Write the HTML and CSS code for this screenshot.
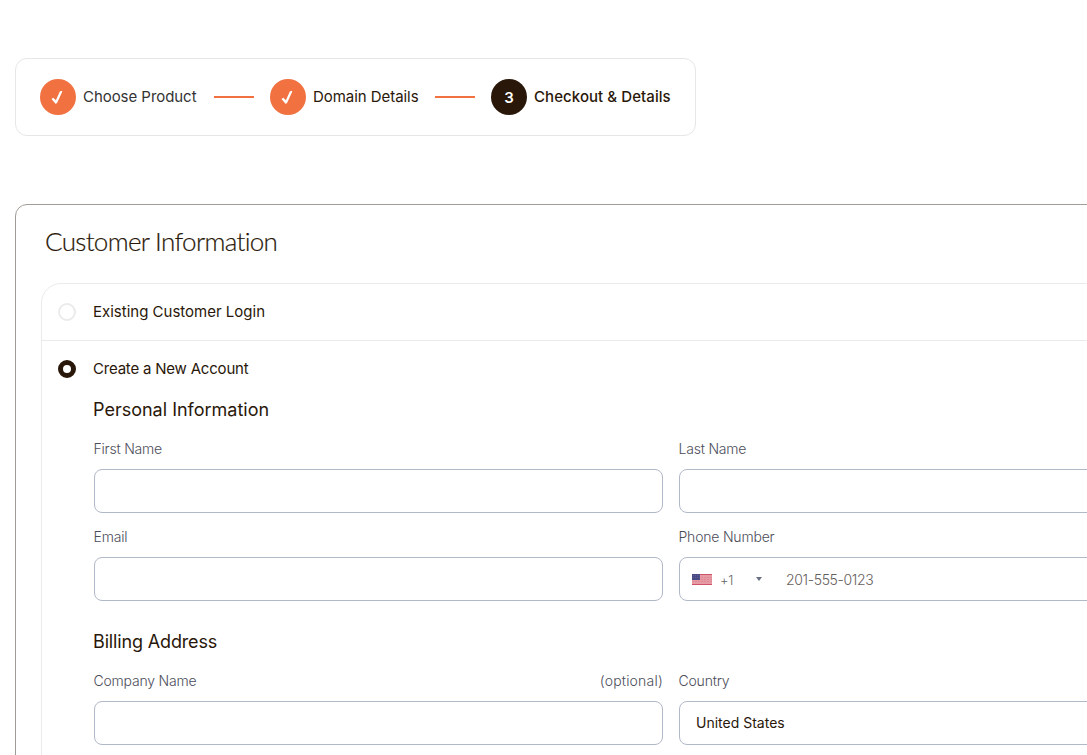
FILE: index.html
```html
<!DOCTYPE html>
<html lang="en">
<head>
  <meta charset="UTF-8" />
  <meta name="viewport" content="width=device-width, initial-scale=1.0" />
  <title>Checkout</title>
  <link rel="stylesheet" href="styles.css">
</head>
<body>
  <div class="page">
    <!-- Order steps -->
    <div class="steps">
      <div class="step">
        <span class="step-icon">
          <svg width="18" height="18" viewBox="0 0 18 18"><path d="M2.5 11 L4.3 9.8 L6.9 12.3 L10.6 3.9 Q11.2 2.6 12.9 3.1 Q13.5 3.4 13 4.2 L8.3 14.6 Q7.5 16.2 6.3 15.5 Z" fill="#fff" /></svg>
        </span>
        <span class="step-label choose">Choose Product</span>
      </div>
      <span class="step-line"></span>
      <div class="step">
        <span class="step-icon">
          <svg width="18" height="18" viewBox="0 0 18 18"><path d="M2.5 11 L4.3 9.8 L6.9 12.3 L10.6 3.9 Q11.2 2.6 12.9 3.1 Q13.5 3.4 13 4.2 L8.3 14.6 Q7.5 16.2 6.3 15.5 Z" fill="#fff" /></svg>
        </span>
        <span class="step-label domain">Domain Details</span>
      </div>
      <span class="step-line"></span>
      <div class="step active">
        <span class="step-icon">3</span>
        <span class="step-label">Checkout &amp; Details</span>
      </div>
    </div>

    <div class="card">
      <h2>Customer Information</h2>
      <div class="panel">
        <label class="choice">
          <input type="radio" name="custtype" />
          <span class="existing">Existing Customer Login</span>
        </label>
        <div class="account">
          <label class="choice">
            <input type="radio" name="custtype" checked />
            <span class="create">Create a New Account</span>
          </label>
          <div class="account-form">
            <h3>Personal Information</h3>
            <div class="fields">
              <div class="field">
                <label for="firstname"><span>First Name</span></label>
                <input type="text" id="firstname" />
              </div>
              <div class="field">
                <label for="lastname"><span>Last Name</span></label>
                <input type="text" id="lastname" />
              </div>
              <div class="field">
                <label for="email"><span>Email</span></label>
                <input type="text" id="email" />
              </div>
              <div class="field">
                <label for="phone"><span>Phone Number</span></label>
                <div class="phone">
                  <svg class="flag" width="20" height="11" viewBox="0 0 20 11">
                    <rect width="20" height="11" fill="#e59aa4" />
                    <path d="M0 .5h20M0 10.5h20" stroke="#cf5368" />
                    <path d="M0 3.5h20M0 5.5h20M0 7.5h20" stroke="#dc808e" stroke-dasharray="2 1" stroke-width=".7" />
                    <rect width="8" height="6" fill="#494a83" />
                    <path d="M1 1.5h7M1 3.5h7" stroke="#706c9c" stroke-width=".6" stroke-dasharray="1 1" />
                  </svg>
                  <span class="dial-code">+1</span>
                  <span class="arrow"></span>
                  <input type="tel" id="phone" placeholder="201-555-0123" />
                </div>
              </div>
            </div>

            <h3 class="billing">Billing Address</h3>
            <div class="fields">
              <div class="field">
                <label for="company"><span>Company Name</span> <span class="optional">(optional)</span></label>
                <input type="text" id="company" />
              </div>
              <div class="field">
                <label for="country"><span>Country</span></label>
                <select id="country">
                  <option>United States</option>
                </select>
              </div>
            </div>
          </div>
        </div>
      </div>
    </div>
  </div>
</body>
</html>
```
FILE: styles.css
```css
* {
  box-sizing: border-box;
}
body {
  margin: 0;
  background: #fff;
  color: #291709;
  font-family: Inter, "Liberation Sans", sans-serif;
  font-size: 15px;
  letter-spacing: -0.2px;
  height: 755px;
  overflow: hidden;
}
.page {
  width: 1307px;
  padding: 58px 0 0 15px;
}
.steps {
  display: flex;
  align-items: center;
  width: 681px;
  height: 78px;
  padding: 0 24px;
  border: 1px solid #e6e6e6;
  border-radius: 12px;
}
.step {
  display: flex;
  align-items: center;
  gap: 7px;
  white-space: nowrap;
}
.step-icon {
  display: flex;
  align-items: center;
  justify-content: center;
  width: 36px;
  height: 36px;
  border-radius: 50%;
  background: #f17141;
  color: #fff;
  font-weight: 600;
}
.active .step-icon {
  background: #291709;
}
.step-label {
  padding-bottom: 2px;
  letter-spacing: -0.05px;
}
.step-label.choose {
  width: 115px;
  color: #333;
}
.step-label.domain {
  width: 106px;
}
.active .step-label {
  font-weight: 500;
  letter-spacing: 0.07px;
}
.step-line {
  width: 40px;
  height: 2px;
  margin: 0 16px;
  background: #f17141;
}
.card {
  height: 700px;
  margin-top: 68px;
  padding: 0 25px;
  border: 1px solid #a29c97;
  border-radius: 12px;
}
h2 {
  margin: 0;
  padding: 16px 0 0 4px;
  height: 78px;
  font-family: Lato, sans-serif;
  font-size: 26px;
  font-weight: 300;
  line-height: 40px;
  letter-spacing: -0.68px;
  -webkit-text-stroke: 0.2px #291709;
}
.panel {
  height: 600px;
  border: 1px solid #ebebeb;
  border-radius: 20px;
}
.choice {
  display: flex;
  align-items: center;
  gap: 17px;
  height: 56px;
  padding-left: 16px;
}
.choice span {
  padding-bottom: 2px;
}
.choice .existing {
  letter-spacing: 0;
}
.choice input {
  appearance: none;
  width: 18px;
  height: 18px;
  margin: 0;
  border: 2px solid #ebebeb;
  border-radius: 50%;
}
.choice input:checked {
  border: 5px solid #291709;
}
.account {
  border-top: 1px solid #ebebeb;
}
.account-form {
  padding: 0 52px;
}
h3 {
  margin: 0 0 0 -1px;
  font-size: 18px;
  font-weight: 400;
  line-height: 26px;
  letter-spacing: 0;
}
h3.billing {
  margin-top: 28px;
  letter-spacing: -0.15px;
}
.fields {
  display: grid;
  grid-template-columns: 569px 569px;
  gap: 12px 16px;
  margin-top: 14px;
}
.field label {
  display: flex;
  justify-content: space-between;
  height: 32px;
  margin-left: -0.5px;
  color: #4c4d5a;
  font-size: 14px;
  font-weight: 300;
  line-height: 24px;
}
.field .optional {
  letter-spacing: 0.2px;
}
.field > input,
.field select,
.phone {
  display: flex;
  align-items: center;
  width: 100%;
  height: 44px;
  padding: 0 16px;
  border: 1px solid #b1b8c8;
  border-radius: 8px;
  background: #fff;
}
.field select {
  appearance: none;
  padding-bottom: 2px;
  color: #291709;
  font: inherit;
  font-size: 14px;
  letter-spacing: 0;
}
.field .phone {
  padding: 0 12px;
  color: #666;
  font-size: 13px;
  font-weight: 300;
}
.dial-code {
  width: 36px;
  margin-left: 8px;
  padding-top: 2px;
}
.arrow {
  border: 3px solid transparent;
  border-top: 4px solid #687080;
  border-bottom: 0;
}
.phone input {
  width: 300px;
  margin-left: 24px;
  padding: 0;
  border: 0;
  font: inherit;
  font-size: 14px;
  letter-spacing: -0.35px;
}
.phone input::placeholder {
  color: #66605c;
}
```
